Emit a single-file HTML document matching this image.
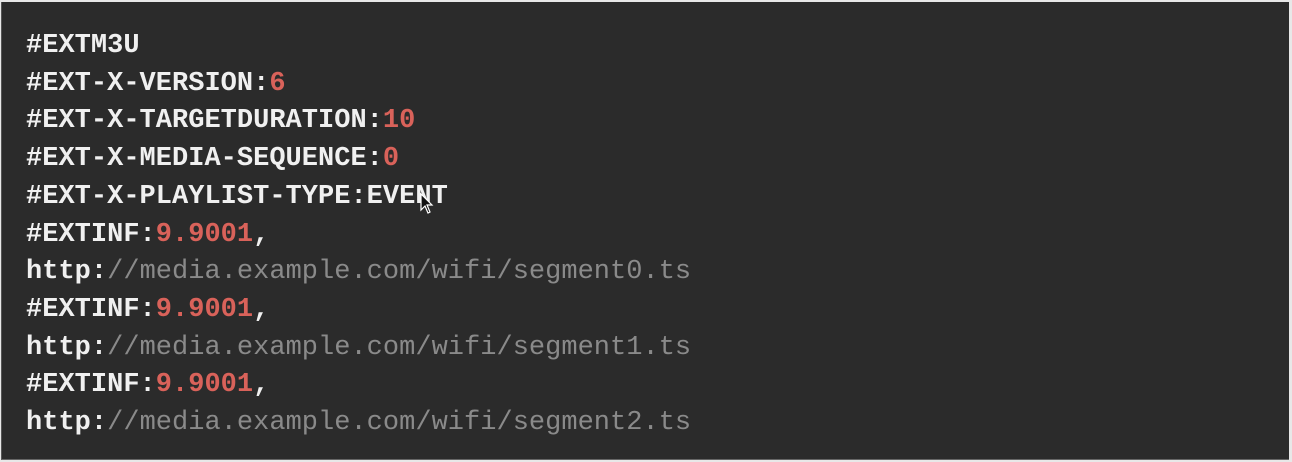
<!DOCTYPE html>
<html><head><style>
html,body{margin:0;padding:0;width:1292px;height:462px;overflow:hidden;background:#e8e8e8;}
.box{position:absolute;left:1px;top:2px;width:1287px;height:457px;background:#2b2b2b;border-left:1px solid #555;border-bottom:1px solid #666;}
pre{position:absolute;left:26px;top:28px;margin:0;font-family:"Liberation Mono",monospace;font-size:27px;line-height:37.7px;color:#f0f0f0;font-weight:bold;letter-spacing:0.02px;}
.n{color:#d9625a;font-weight:bold;}
.g{color:#8a8a8a;font-weight:normal;}
</style></head><body>
<div class="box"></div>
<pre>#EXTM3U
#EXT-X-VERSION:<span class="n">6</span>
#EXT-X-TARGETDURATION:<span class="n">10</span>
#EXT-X-MEDIA-SEQUENCE:<span class="n">0</span>
#EXT-X-PLAYLIST-TYPE:EVENT
#EXTINF:<span class="n">9.9001</span>,
http:<span class="g">//media.example.com/wifi/segment0.ts</span>
#EXTINF:<span class="n">9.9001</span>,
http:<span class="g">//media.example.com/wifi/segment1.ts</span>
#EXTINF:<span class="n">9.9001</span>,
http:<span class="g">//media.example.com/wifi/segment2.ts</span></pre>
<svg style="position:absolute;left:420px;top:193px" width="16" height="24" viewBox="0 0 16 24"><path d="M1 1 L1 17 L5 13 L8 20 L10 19 L7 12 L12 12 Z" fill="#111" stroke="#fff" stroke-width="1.2"/></svg>
</body></html>
